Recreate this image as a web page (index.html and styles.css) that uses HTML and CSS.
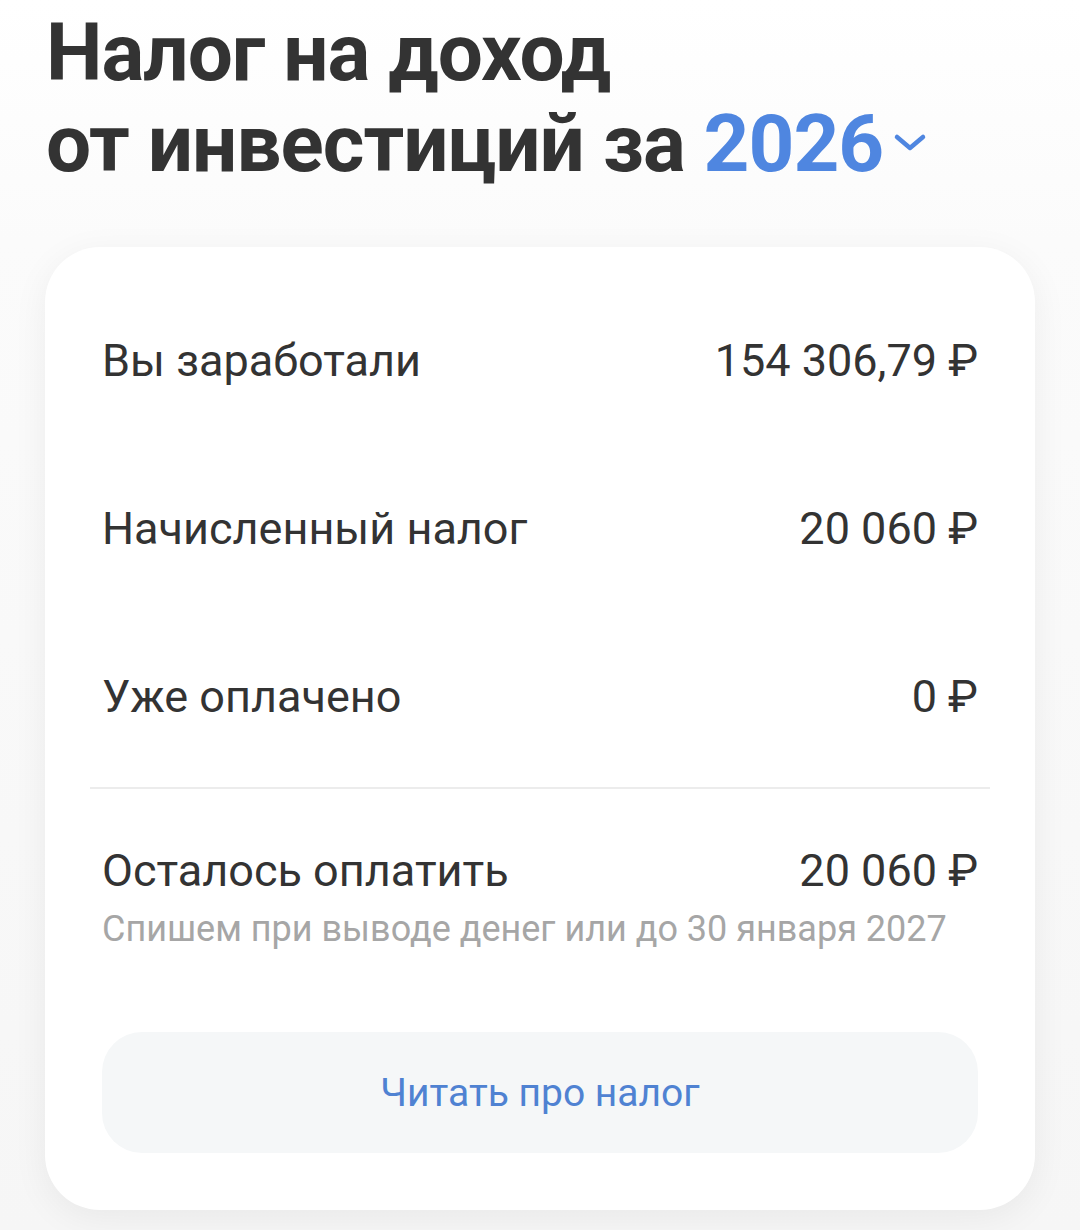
FILE: index.html
```html
<!DOCTYPE html>
<html lang="ru">
<head>
    <meta charset="UTF-8">
    <meta name="viewport" content="width=device-width, initial-scale=1.0">
    <title>Налог на доход от инвестиций</title>
    <link rel="stylesheet" href="styles.css">
</head>
<body>

<h1 class="title">
    Налог на доход<br>
    от инвестиций за <span class="year">2026<svg class="chevron" width="34" height="20" viewBox="0 0 34 20"><path d="M4 4 L17 15 L30 4" fill="none" stroke="#4f86e0" stroke-width="4.5" stroke-linecap="round" stroke-linejoin="round"/></svg></span>
</h1>

<div class="card">
    <div class="row">
        <span class="label">Вы заработали</span>
        <span class="value">154 306,79 ₽</span>
    </div>
    <div class="row">
        <span class="label">Начисленный налог</span>
        <span class="value">20 060 ₽</span>
    </div>
    <div class="row">
        <span class="label">Уже оплачено</span>
        <span class="value">0 ₽</span>
    </div>

    <div class="divider"></div>

    <div class="row row-total">
        <span class="label">Осталось оплатить</span>
        <span class="value">20 060 ₽</span>
    </div>
    <p class="note">Спишем при выводе денег или до 30 января 2027</p>

    <button class="read-btn">Читать про налог</button>
</div>

</body>
</html>
```

FILE: styles.css
```css
body {
    margin: 0;
    padding: 0;
    font-family: Roboto, "Liberation Sans", sans-serif;
    background: linear-gradient(#ffffff 0, #fbfbfb 240px, #f6f6f6 100%);
    color: #333333;
    min-height: 1230px;
}
.title {
    margin: 0;
    padding: 8px 0 0 46px;
    font-size: 80px;
    line-height: 91px;
    font-weight: 700;
    color: #333333;
    letter-spacing: -1px;
}
.year {
    color: #4f86e0;
}
.chevron {
    margin-left: 10px;
    vertical-align: 18px;
}
.card {
    margin: 57px 45px 0 45px;
    background: #ffffff;
    border-radius: 55px;
    box-shadow: 0 8px 36px rgba(0, 0, 0, 0.06);
    padding: 74px 57px 57px 57px;
}
.row {
    display: flex;
    justify-content: space-between;
    align-items: baseline;
    font-size: 45px;
    line-height: 80px;
    margin-bottom: 88px;
}
.row:nth-child(3) {
    margin-bottom: 50px;
}
.divider {
    height: 2px;
    background: #ececec;
    margin: 0 -12px;
}
.row-total {
    margin: 42px 0 0 0;
}
.note {
    margin: -6px 0 0 0;
    font-size: 36px;
    line-height: 48px;
    color: #a6a6a6;
}
.read-btn {
    display: block;
    width: 100%;
    margin-top: 79px;
    height: 121px;
    border: none;
    border-radius: 40px;
    background: #f5f7f8;
    color: #4f82d2;
    font-family: Roboto, "Liberation Sans", sans-serif;
    font-size: 39px;
}
```
